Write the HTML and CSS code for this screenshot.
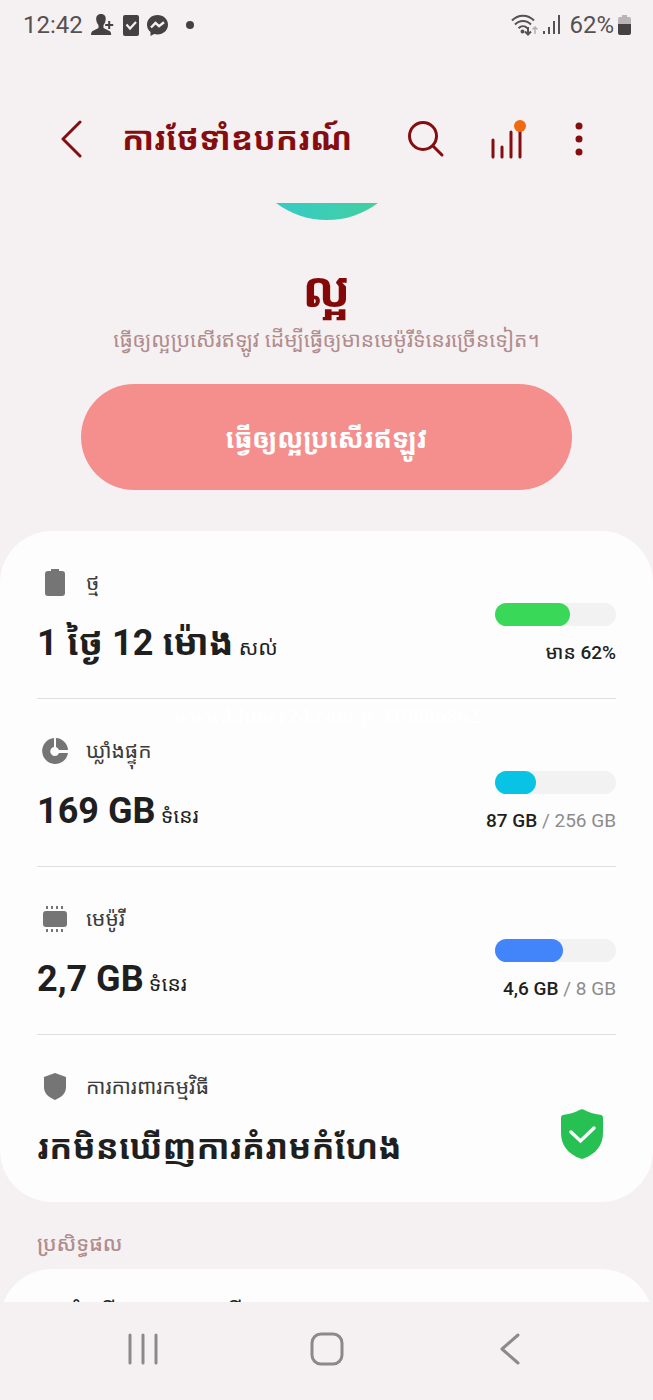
FILE: index.html
```
<!DOCTYPE html>
<html lang="km">
<head>
    <meta charset="UTF-8">
    <meta name="viewport" content="width=device-width, initial-scale=1.0">
    <title>ការថែទាំឧបករណ៍</title>
    <link rel="stylesheet" href="styles.css">
</head>
<body>
    <div class="screen">

        <div class="status-bar">
            <span class="clock">12:42</span>
            <svg class="status-person" width="24" height="22" viewBox="0 0 24 22" fill="#454042">
                <path d="M10 0c3.400 0 5 2.300 4.700 5.500-.2 2.500-1.200 4.500-2.200 5.600v3l5.500 2.600c1.500.7 2.200 1.800 2.200 4.300H0c0-2.500.7-3.600 2.200-4.300l5.300-2.600v-3C6.300 9.900 5.400 8 5.200 5.500 5 2.300 6.600 0 10 0z"/>
                <path d="M17.200 7h2v3h3v2h-3v3h-2v-3h-3v-2h3z"/>
            </svg>
            <svg width="16" height="21" viewBox="0 0 16 21">
                <rect width="16" height="21" rx="2" fill="#454042"/>
                <path d="M3.500 9.500l3.500 4 6-6.500" fill="none" stroke="#f5f1f2" stroke-width="2.200"/>
            </svg>
            <svg width="21" height="21" viewBox="0 0 21 21">
                <path d="M10.500 0C4.700 0 0 4.200 0 9.700c0 3 1.300 5.500 3.500 7.300V21l3.600-2c1.100.3 2.200.4 3.400.4 5.800 0 10.500-4.200 10.500-9.700S16.300 0 10.500 0z" fill="#454042"/>
                <path d="M4 12.500l4.500-4.600 3.500 3.300 5-4" fill="none" stroke="#f5f1f2" stroke-width="2.400"/>
            </svg>
            <span class="more-dot"></span>
            <svg class="status-wifi" width="28" height="22" viewBox="0 0 28 22" fill="none" stroke="#555052" stroke-width="2">
                <path d="M1 6.500c6-6.500 16-6.500 22 0M4 10.500c4.500-4.700 11.500-4.700 16 0M7.500 14.300c2.800-2.800 6.200-2.800 9 0"/>
                <circle cx="11.500" cy="17.500" r="1"/>
                <path d="M17 13v7M14 17.500l3 3 3-3"/>
                <path d="M24 20v-7M21.500 15.500l2.500-2.500 2.500 2.500" stroke="#b3aeb0" stroke-width="1.500"/>
            </svg>
            <svg width="18" height="20" viewBox="0 0 18 20" fill="#555052">
                <path d="M0 16h2v3H0zM5 12h2v7H5zM10 6h2v13h-2zM15 0h2v19h-2z"/>
            </svg>
            <span class="percent">62%</span>
            <svg class="status-battery" width="13" height="20" viewBox="0 0 13 20">
                <path d="M4 0h5v2h2a2 2 0 0 1 2 2v6H0V4a2 2 0 0 1 2-2h2z" fill="#b9b4b6"/>
                <path d="M0 9h13v9a2 2 0 0 1-2 2H2a2 2 0 0 1-2-2z" fill="#454042"/>
            </svg>
        </div>

        <header class="app-bar">
            <button class="icon-btn" aria-label="Back">
                <svg width="22" height="40" viewBox="0 0 22 40"><path d="M20 3L3 20l17 17" /></svg>
            </button>
            <h1>ការថែទាំឧបករណ៍</h1>
            <button class="icon-btn" aria-label="Search">
                <svg width="38" height="38" viewBox="0 0 38 38"><circle cx="16" cy="16" r="13.500"/><path d="M26 26l9 9"/></svg>
            </button>
            <button class="icon-btn chart-btn" aria-label="Usage">
                <svg width="38" height="42" viewBox="0 0 38 42"><path d="M4 22v17M13 29v10M22 14v25M31 10v29"/><circle class="badge" cx="31" cy="8" r="6"/></svg>
            </button>
            <button class="icon-btn menu-btn" aria-label="More options">
                <svg class="dots" width="8" height="34" viewBox="0 0 8 34"><circle cx="4" cy="4" r="3.500"/><circle cx="4" cy="17" r="3.500"/><circle cx="4" cy="30" r="3.500"/></svg>
            </button>
        </header>

        <main class="content">
            <section class="hero">
                <svg class="face" width="102" height="17" viewBox="0 0 102 17">
                    <defs>
                        <linearGradient id="faceFill">
                            <stop offset="0" stop-color="#36cbc6"/>
                            <stop offset="1" stop-color="#43cfa0"/>
                        </linearGradient>
                    </defs>
                    <path d="M0 0h102a85 85 0 0 1-102 0z" fill="url(#faceFill)"/>
                </svg>
                <h2>ល្អ</h2>
                <p>ធ្វើឲ្យល្អប្រសើរឥឡូវ ដើម្បីធ្វើឲ្យមានមេម៉ូរីទំនេរច្រើនទៀត។</p>
                <button class="optimize-btn">ធ្វើឲ្យល្អប្រសើរឥឡូវ</button>
            </section>

            <section class="card">
                <div class="row">
                    <div class="info">
                        <div class="label">
                            <svg width="36" height="32" viewBox="0 0 36 32"><path d="M14 2h8v2h3a3 3 0 0 1 3 3v19a3 3 0 0 1-3 3H11a3 3 0 0 1-3-3V7a3 3 0 0 1 3-3h3z"/></svg>
                            <span>ថ្ម</span>
                        </div>
                        <div class="value">1 ថ្ងៃ 12 ម៉ោង<small> សល់</small></div>
                    </div>
                    <div class="usage">
                        <div class="bar"><div class="fill battery" style="width: 62%"></div></div>
                        <div class="amount">មាន 62%</div>
                    </div>
                </div>

                <div class="row">
                    <div class="info">
                        <div class="label">
                            <svg width="36" height="32" viewBox="0 0 36 32">
                                <path d="M17 3v9a4.500 4.500 0 1 0 5 6h9A13 13 0 1 1 17 3z"/>
                                <path d="M19 3a13 13 0 0 1 12 12h-9a5 5 0 0 0-3-3z"/>
                            </svg>
                            <span>ឃ្លាំងផ្ទុក</span>
                        </div>
                        <div class="value">169 GB<small> ទំនេរ</small></div>
                    </div>
                    <div class="usage">
                        <div class="bar"><div class="fill storage" style="width: 34%"></div></div>
                        <div class="amount">87 GB <span>/ 256 GB</span></div>
                    </div>
                    <div class="watermark">www.khmer24.com/p-319096862</div>
                </div>

                <div class="row">
                    <div class="info">
                        <div class="label">
                            <svg width="36" height="32" viewBox="0 0 36 32">
                                <rect x="6" y="8" width="24" height="16" rx="3"/>
                                <path d="M9 3h2v3H9zM14 3h2v3h-2zM19 3h2v3h-2zM24 3h2v3h-2zM9 26h2v3H9zM14 26h2v3h-2zM19 26h2v3h-2zM24 26h2v3h-2z"/>
                            </svg>
                            <span>មេម៉ូរី</span>
                        </div>
                        <div class="value">2,7 GB<small> ទំនេរ</small></div>
                    </div>
                    <div class="usage">
                        <div class="bar"><div class="fill memory" style="width: 56%"></div></div>
                        <div class="amount">4,6 GB <span>/ 8 GB</span></div>
                    </div>
                </div>

                <div class="row">
                    <div class="info">
                        <div class="label">
                            <svg width="36" height="32" viewBox="0 0 36 32"><path d="M18 2l11 4v10c0 6-4 10-11 13-7-3-11-7-11-13V6z"/></svg>
                            <span>ការការពារកម្មវិធី</span>
                        </div>
                        <div class="value message">រកមិនឃើញការគំរាមកំហែង</div>
                    </div>
                    <svg class="shield" width="42" height="50" viewBox="0 0 42 50">
                        <path d="M19.500.600q1.500-.7 3 0C28 3.500 33 5 39 5.800q3 .4 3 3V24c0 12-7 21-19.500 25.600q-1.500.6-3 0C7 45 0 36 0 24V8.800q0-2.600 3-3C9 5 14 3.500 19.500.600z" fill="#27c153"/>
                        <path d="M10 23l9.500 9L33 19" fill="none" stroke="#fff" stroke-width="3.400" stroke-linecap="round"/>
                    </svg>
                </div>
            </section>

            <h3>ប្រសិទ្ធផល</h3>
            <section class="card performance">ការដំណើរការល្អប្រសើរ</section>
        </main>

        <nav class="nav-bar">
            <button class="icon-btn" aria-label="Recent apps">
                <svg width="34" height="34" viewBox="0 0 34 34"><path d="M4 3v28M17 3v28M30 3v28"/></svg>
            </button>
            <button class="icon-btn" aria-label="Home">
                <svg width="34" height="34" viewBox="0 0 34 34"><rect x="2" y="2" width="30" height="30" rx="9"/></svg>
            </button>
            <button class="icon-btn" aria-label="Go back">
                <svg width="34" height="34" viewBox="0 0 34 34"><path d="M25 3L9 17l16 14"/></svg>
            </button>
        </nav>
    </div>
</body>
</html>
```
FILE: styles.css
```
* {
    box-sizing: border-box;
}

body {
    margin: 0;
    background-color: #f5f1f2;
    font-family: Roboto, "Noto Sans Khmer", "Khmer OS", "Noto Sans", sans-serif;
    color: #1f1f1f;
}

h1, h2, h3, p {
    margin: 0;
}

.screen {
    display: flex;
    flex-direction: column;
    height: 100vh;
    overflow: hidden;
}

.status-bar {
    display: flex;
    align-items: center;
    gap: 8px;
    height: 50px;
    padding: 0 22px 0 23px;
    font-size: 24px;
    color: #555052;
}

.more-dot {
    width: 8px;
    height: 8px;
    margin-left: 10px;
    border-radius: 50%;
    background-color: #454042;
}

.status-wifi {
    margin-left: auto;
    margin-right: -4px;
}

.status-battery {
    margin-left: -4px;
}

.icon-btn {
    display: flex;
    align-items: center;
    justify-content: center;
    padding: 0;
    border: none;
    background: none;
    cursor: pointer;
}

.app-bar {
    display: flex;
    align-items: center;
    flex-shrink: 0;
    height: 153px;
    padding: 24px 70px 0 60px;
}

.app-bar h1 {
    flex: 1;
    margin-left: 40px;
    font-size: 33px;
    line-height: 48px;
    font-weight: 700;
    color: #850d10;
    white-space: nowrap;
}

.app-bar svg {
    fill: none;
    stroke: #850d10;
    stroke-width: 3;
    stroke-linecap: round;
    stroke-linejoin: round;
}

.app-bar .badge {
    fill: #f26a0f;
    stroke: none;
}

.app-bar .dots {
    fill: #850d10;
    stroke: none;
}

.chart-btn {
    margin-left: 44px;
}

.menu-btn {
    margin-left: 48px;
}

.content {
    flex: 1;
    min-height: 0;
    overflow: hidden;
}

.hero {
    display: flex;
    flex-direction: column;
    align-items: center;
    padding: 0 81px;
    margin-bottom: 41px;
}

.hero h2 {
    margin-top: 38px;
    font-size: 50px;
    line-height: 64px;
    color: #850808;
}

.hero p {
    font-size: 21px;
    line-height: 36px;
    color: #b08c8e;
    white-space: nowrap;
}

.optimize-btn {
    width: 100%;
    height: 106px;
    margin-top: 26px;
    border: none;
    border-radius: 53px;
    background-color: #f48f8e;
    color: #fff;
    font-family: inherit;
    font-size: 27px;
    font-weight: 700;
    cursor: pointer;
}

.card {
    padding: 0 37px;
    border-radius: 52px;
    background-color: #fdfdfd;
}

.row {
    position: relative;
    display: flex;
    justify-content: space-between;
    align-items: flex-end;
    padding: 36px 0 31px;
}

.row + .row {
    border-top: 1px solid #dedede;
}

.label {
    display: flex;
    align-items: center;
    gap: 13px;
    height: 32px;
    margin-bottom: 20px;
    font-size: 21px;
    line-height: 32px;
    color: #3c3c3c;
}

.label svg {
    fill: #757575;
}

.value {
    font-size: 36px;
    line-height: 48px;
    height: 48px;
    font-weight: 700;
    white-space: nowrap;
}

.value small {
    font-size: 21px;
    font-weight: 400;
}

.value.message {
    font-size: 34px;
}

.usage {
    display: flex;
    flex-direction: column;
    align-items: flex-end;
    gap: 13px;
}

.bar {
    width: 121px;
    height: 23px;
    border-radius: 12px;
    background-color: #f2f2f2;
}

.fill {
    height: 100%;
    border-radius: 12px;
}

.battery {
    background-color: #39d859;
}

.storage {
    background-color: #08c3e4;
}

.memory {
    background-color: #4285fb;
}

.amount {
    font-size: 19px;
    line-height: 28px;
    height: 28px;
    font-weight: 500;
    white-space: nowrap;
}

.amount span {
    font-weight: 400;
    color: #8c8c8c;
}

.shield {
    margin: 0 13px 12px 0;
}

.watermark {
    position: absolute;
    top: 4px;
    left: 0;
    right: 0;
    text-align: center;
    font-family: "Liberation Serif", serif;
    font-size: 22px;
    font-weight: 700;
    color: #fff;
}

h3 {
    margin: 24px 37px 7px;
    font-size: 21px;
    line-height: 36px;
    font-weight: 500;
    color: #b08c8e;
}

.performance {
    padding-top: 24px;
    padding-bottom: 40px;
    font-size: 26px;
    line-height: 40px;
}

.nav-bar {
    display: flex;
    justify-content: space-between;
    align-items: center;
    flex-shrink: 0;
    height: 98px;
    padding: 0 126px 4px;
}

.nav-bar svg {
    fill: none;
    stroke: #8c898a;
    stroke-width: 3;
    stroke-linecap: round;
    stroke-linejoin: round;
}
```
